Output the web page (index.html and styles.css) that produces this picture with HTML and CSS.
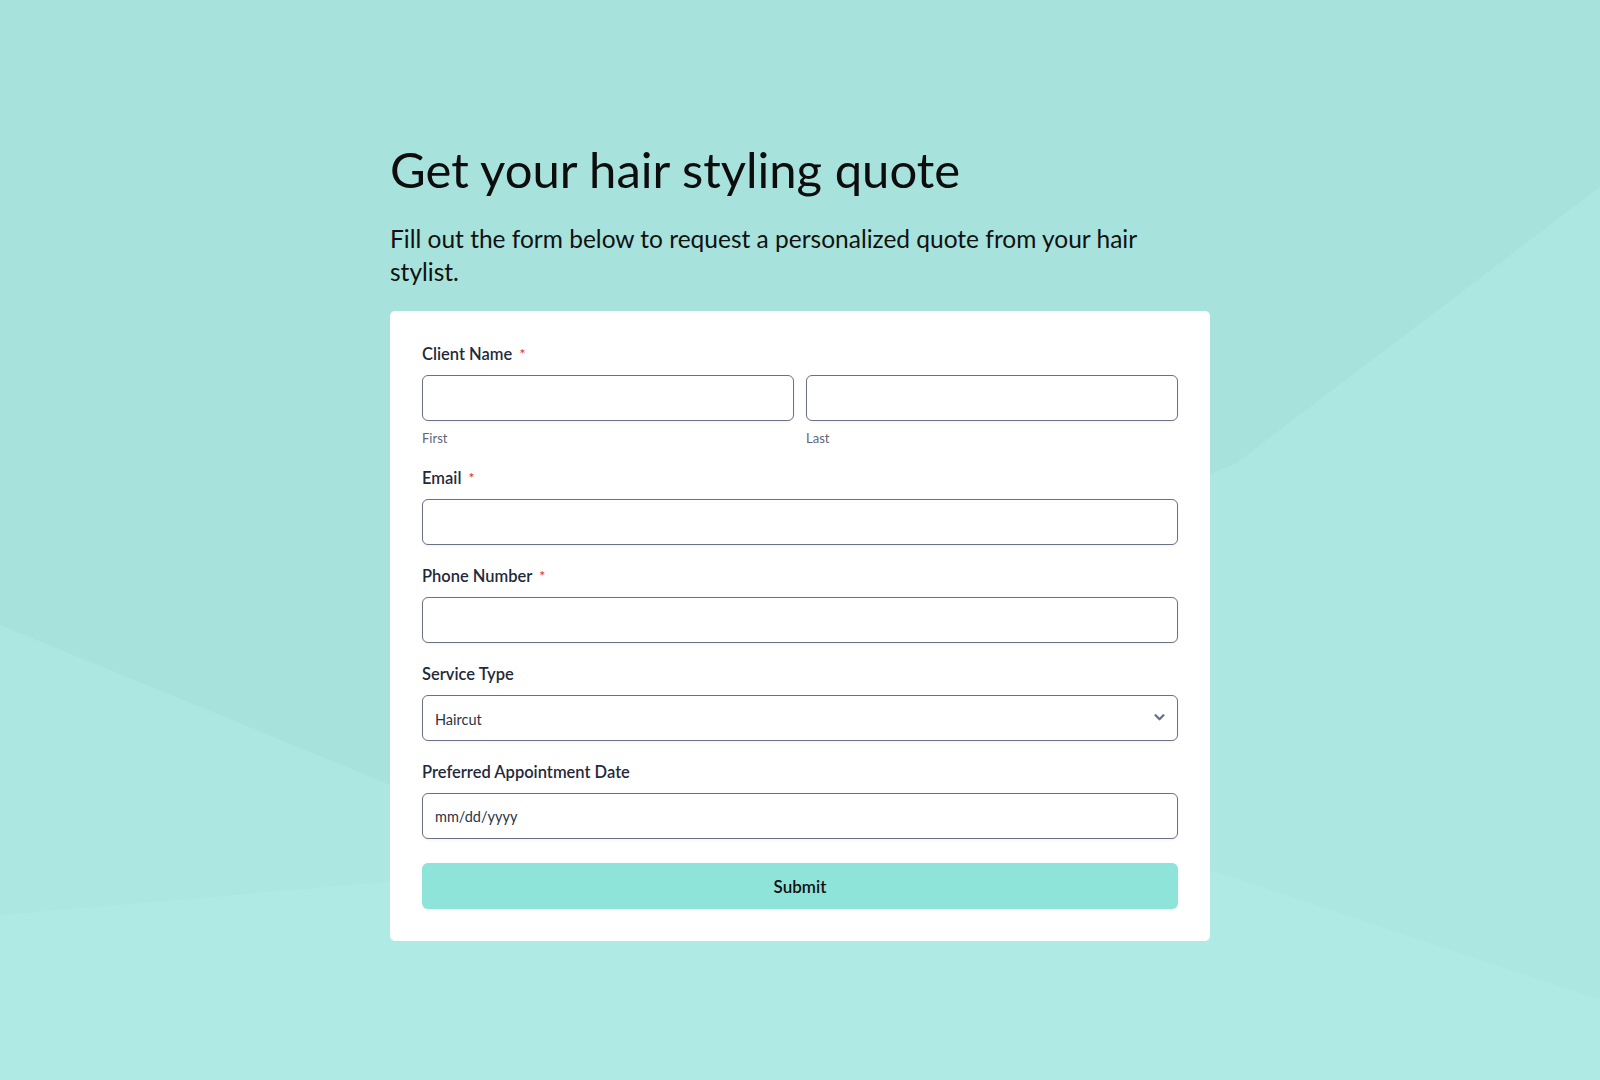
FILE: index.html
```html
<!DOCTYPE html>
<html lang="en">
<head>
<meta charset="utf-8">
<title>Get your hair styling quote</title>
<link rel="stylesheet" href="styles.css">
</head>
<body>
<svg class="backdrop" viewBox="0 0 1600 1080" preserveAspectRatio="none" aria-hidden="true">
  <polygon points="0,625 398,788 1235,464 1600,187 1600,1080 0,1080" fill="#ace7e1"/>
  <polygon points="0,915 398,881 1210,870 1600,1000 1600,1080 0,1080" fill="#afeae4"/>
</svg>
<main class="page">
  <h1 class="title">Get your hair styling quote</h1>
  <p class="subtitle">Fill out the form below to request a personalized quote from your hair stylist.</p>
  <form class="card">
    <div class="field">
      <div class="label">Client Name <span class="req">*</span></div>
      <div class="name-row">
        <div class="name-col">
          <input class="input" type="text">
          <div class="sublabel">First</div>
        </div>
        <div class="name-col">
          <input class="input" type="text">
          <div class="sublabel">Last</div>
        </div>
      </div>
    </div>
    <div class="field">
      <div class="label">Email <span class="req">*</span></div>
      <input class="input" type="text">
    </div>
    <div class="field">
      <div class="label">Phone Number <span class="req">*</span></div>
      <input class="input" type="text">
    </div>
    <div class="field">
      <div class="label">Service Type</div>
      <div class="select-wrap">
        <select class="input select">
          <option>Haircut</option>
        </select>
        <svg class="chevron" viewBox="0 0 12 8" aria-hidden="true"><path d="M1.5 1.5 L6 6 L10.5 1.5" fill="none" stroke="#6b7080" stroke-width="2.6" stroke-linecap="round" stroke-linejoin="round"/></svg>
      </div>
    </div>
    <div class="field">
      <div class="label">Preferred Appointment Date</div>
      <input class="input date" type="text" placeholder="mm/dd/yyyy">
    </div>
    <button class="submit" type="button">Submit</button>
  </form>
</main>
</body>
</html>
```

FILE: styles.css
```css
html, body {
  margin: 0;
  padding: 0;
}
body {
  background: #a8e2dc;
  font-family: Lato, "Noto Sans", sans-serif;
  min-height: 1080px;
  position: relative;
  overflow: hidden;
}
.backdrop {
  position: absolute;
  left: 0;
  top: 0;
  width: 1600px;
  height: 1080px;
  z-index: 0;
}
.page {
  position: relative;
  z-index: 1;
  width: 820px;
  margin: 0 auto;
  padding-top: 140px;
}
.title {
  margin: 0;
  font-family: Lato, sans-serif;
  font-weight: 400;
  font-size: 49px;
  line-height: 58px;
  color: #0d0d0d;
}
.subtitle {
  margin: 24px 0 23px;
  font-family: Lato, sans-serif;
  font-size: 24.5px;
  line-height: 33px;
  color: #111;
  max-width: 780px;
}
.card {
  background: #fff;
  border-radius: 5px;
  padding: 32px;
  display: flex;
  flex-direction: column;
  gap: 20px;
}
.field {
  display: flex;
  flex-direction: column;
}
.label {
  font-size: 16.5px;
  line-height: 22px;
  font-weight: 600;
  color: #1f2a3c;
  margin-bottom: 10px;
}
.req {
  color: #e0412b;
  font-size: 14px;
  margin-left: 3px;
  vertical-align: 1px;
}
.name-row {
  display: grid;
  grid-template-columns: 1fr 1fr;
  gap: 12px;
}
.name-col {
  display: flex;
  flex-direction: column;
}
.input {
  box-sizing: border-box;
  width: 100%;
  height: 46px;
  border: 1px solid #6b7082;
  border-radius: 6px;
  background: #fff;
  box-shadow: 0 1px 3px rgba(0, 0, 0, 0.06);
  padding: 0 12px;
  font-family: Lato, sans-serif;
  font-size: 14.5px;
  color: #2c3345;
  outline: none;
  margin: 0;
}
.date::placeholder {
  color: #2c3345;
  opacity: 1;
}
.sublabel {
  margin-top: 8px;
  font-size: 13px;
  line-height: 18px;
  color: #5f6577;
}
.select-wrap {
  position: relative;
}
.select {
  appearance: none;
  -webkit-appearance: none;
  padding-top: 2px;
}
.chevron {
  position: absolute;
  right: 13px;
  top: 19px;
  width: 11px;
  height: 7px;
  pointer-events: none;
}
.submit {
  margin-top: 4px;
  height: 46px;
  border: none;
  border-radius: 6px;
  background: #8ee4d8;
  box-shadow: 0 1px 3px rgba(0, 0, 0, 0.06);
  font-family: Lato, sans-serif;
  font-size: 17px;
  font-weight: 600;
  color: #111;
  cursor: pointer;
}
```
